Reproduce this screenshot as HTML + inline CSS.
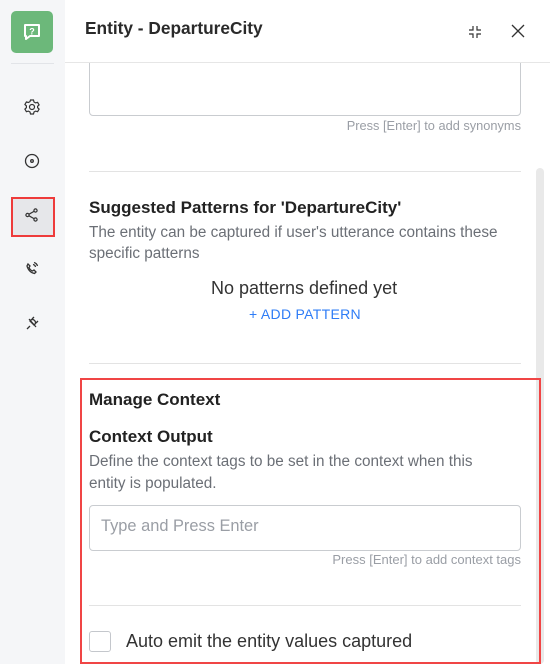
<!DOCTYPE html>
<html><head><style>
*{box-sizing:border-box;margin:0;padding:0}
body{width:550px;height:664px;overflow:hidden;background:#fff;font-family:"Liberation Sans",sans-serif;position:relative;color:#222}
.side{position:absolute;left:0;top:0;width:65px;height:664px;background:#f5f6f8}
.logo{position:absolute;left:11px;top:11px;width:42px;height:42px;border-radius:5px;background:#6cb87a}
.sep{position:absolute;left:11px;top:63px;width:43px;height:1px;background:#e2e4e8}
.ic{position:absolute;left:22px;width:20px;height:20px}
.hl{position:absolute;left:11px;top:197px;width:44px;height:40px;background:#e6e7ea;border:2px solid #ee3b3b}
.hdr{position:absolute;left:65px;top:0;width:485px;height:63px;border-bottom:1px solid #e6e6e6;background:#fff}
.t{position:absolute;white-space:nowrap}
.gray{color:#6b6f76}
.hint{color:#9a9ea5;font-size:12.8px}
.line{position:absolute;left:89px;width:432px;height:1px;background:#e3e3e3}
.box{position:absolute;border:1px solid #c9ccd0;border-radius:4px}
</style></head><body>
<div class="side">
 <div class="logo"><svg width="42" height="42" viewBox="0 0 42 42"><path d="M14 14h14v11h-9l-4 3v-3h-1z" fill="none" stroke="#fff" stroke-width="2" stroke-linejoin="round"/><text x="21" y="23.5" font-size="9" font-weight="bold" fill="#fff" text-anchor="middle" font-family="Liberation Sans">?</text></svg></div>
 <div class="sep"></div>
 <svg class="ic" style="top:97px" viewBox="0 0 20 20" fill="none" stroke="#333" stroke-width="1.2"><circle cx="10" cy="10" r="2.5"/><path d="M8.5 3h3l.5 2 1.6.9 2-.6 1.5 2.6-1.5 1.4v1.4l1.5 1.4-1.5 2.6-2-.6-1.6.9-.5 2h-3l-.5-2-1.6-.9-2 .6-1.5-2.6 1.5-1.4V8.9L2.9 7.5 4.4 4.9l2 .6L8 4.6z"/></svg>
 <svg class="ic" style="top:151px" viewBox="0 0 20 20" fill="none" stroke="#333" stroke-width="1.3"><circle cx="10" cy="10" r="6.5"/><circle cx="10" cy="10" r="1.3"/></svg>
 <div class="hl"></div>
 <svg class="ic" style="top:205px" viewBox="0 0 20 20" fill="none" stroke="#333" stroke-width="1.2"><circle cx="5.5" cy="10" r="1.6"/><circle cx="13.5" cy="5.5" r="1.6"/><circle cx="13.5" cy="14.5" r="1.6"/><path d="M7 9.2l5-2.8M7 10.8l5 2.8"/></svg>
 <svg class="ic" style="top:259px" viewBox="0 0 20 20" fill="none" stroke="#333" stroke-width="1.3"><path d="M6 5l2 2-1 1.5c.8 1.8 2 3 3.5 3.5L12 11l2 2-1.5 1.5C9 14 6 11 5 7z"/><path d="M11 5.5a3 3 0 0 1 2.5 2.5M12 3.5a5 5 0 0 1 3.5 3.5"/></svg>
 <svg class="ic" style="top:313px" viewBox="0 0 20 20" fill="none" stroke="#333" stroke-width="1.3"><path d="M5 16l3-3M8 8l4 4c1.5-1 2-2.5 1-4l-1-1c-1.5-1-3-.5-4 1zM10 6l2-2M14 10l2-2M7 6l7 8"/></svg>
</div>
<div class="hdr">
 <div class="t" style="left:20px;top:18px;font-size:17.3px;font-weight:bold;color:#2a2a2a">Entity - DepartureCity</div>
 <svg style="position:absolute;left:401px;top:23px" width="18" height="18" viewBox="0 0 18 18" fill="none" stroke="#333" stroke-width="1.2"><path d="M3 7h4V3M11 3v4h4M3 11h4v4M15 11h-4v4"/></svg>
 <svg style="position:absolute;left:444px;top:22px" width="18" height="18" viewBox="0 0 18 18" fill="none" stroke="#333" stroke-width="1.3"><path d="M3 3l12 12M15 3L3 15"/></svg>
</div>
<div class="box" style="left:89px;top:50px;width:432px;height:66px;z-index:-1"></div>
<div class="t hint" style="right:29px;top:118px">Press [Enter] to add synonyms</div>
<div class="line" style="top:171px"></div>
<div style="position:absolute;left:536px;top:168px;width:8px;height:496px;border-radius:4px;background:#e9e9e9"></div>
<div class="t" style="left:89px;top:198px;font-size:17px;font-weight:bold">Suggested Patterns for 'DepartureCity'</div>
<div class="t gray" style="left:89px;top:222px;font-size:15.3px;line-height:21px">The entity can be captured if user's utterance contains these<br>specific patterns</div>
<div class="t" style="left:211px;top:278px;font-size:18px;color:#333">No patterns defined yet</div>
<div class="t" style="left:249px;top:306px;font-size:14px;color:#2e7cf6;letter-spacing:.3px">+ ADD PATTERN</div>
<div class="line" style="top:363px"></div>
<div style="position:absolute;left:80px;top:378px;width:461px;height:286px;border:2px solid #f04545;border-bottom:none"></div>
<div style="position:absolute;left:80px;top:662px;width:461px;height:2px;background:#f04545"></div>
<div class="t" style="left:89px;top:390px;font-size:17px;font-weight:bold">Manage Context</div>
<div class="t" style="left:89px;top:427px;font-size:17px;font-weight:bold">Context Output</div>
<div class="t gray" style="left:89px;top:451px;font-size:15.3px;line-height:22px">Define the context tags to be set in the context when this<br>entity is populated.</div>
<div class="box" style="left:89px;top:505px;width:432px;height:46px"></div>
<div class="t" style="left:101px;top:517px;font-size:16.4px;color:#9a9ea5">Type and Press Enter</div>
<div class="t hint" style="right:29px;top:552px;font-size:13px">Press [Enter] to add context tags</div>
<div class="line" style="top:605px"></div>
<div style="position:absolute;left:89px;top:631px;width:22px;height:21px;border:1px solid #c4c7cc;border-radius:3px"></div>
<div class="t" style="left:126px;top:631px;font-size:18px;color:#333">Auto emit the entity values captured</div>
</body></html>
